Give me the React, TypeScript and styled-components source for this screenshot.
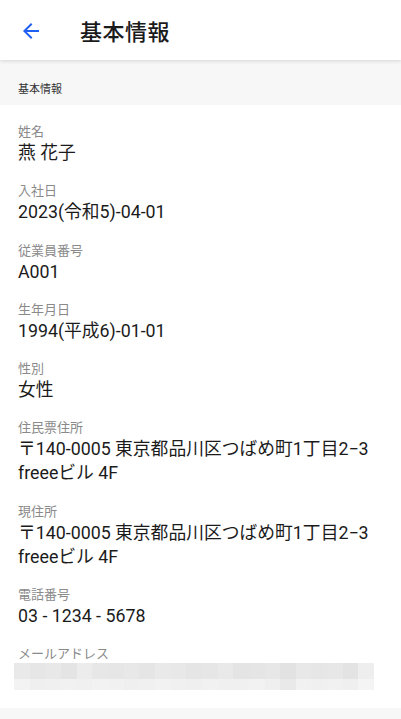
import styled, { createGlobalStyle } from "styled-components";

const GlobalStyle = createGlobalStyle`
  html, body {
    margin: 0;
    padding: 0;
    background: #fff;
    font-family: Roboto, "Noto Sans CJK JP", sans-serif;
    -webkit-font-smoothing: antialiased;
  }
  * { box-sizing: border-box; }
`;

const Page = styled.div`
  width: 401px;
  min-height: 719px;
  display: flex;
  flex-direction: column;
  background: #fff;
`;

const Header = styled.header`
  height: 60px;
  display: flex;
  align-items: center;
  padding-left: 19px;
  background: #fff;
  box-shadow: 0 1px 4px rgba(0, 0, 0, 0.14);
  position: relative;
  z-index: 1;
`;

const BackButton = styled.button`
  width: 24px;
  height: 24px;
  padding: 0;
  border: 0;
  background: none;
  display: flex;
  align-items: center;
  justify-content: center;
  margin-right: 37px;
  margin-top: 2px;
`;

const Title = styled.h1`
  margin: 0;
  font-size: 22px;
  font-weight: 500;
  color: #1b1b1b;
  letter-spacing: 0.5px;
`;

const SectionHeader = styled.div`
  height: 45px;
  display: flex;
  align-items: center;
  padding: 10px 18px 0;
  background: #f7f7f7;
  font-size: 11px;
  color: #333;
`;

const List = styled.dl`
  margin: 0;
  padding: 18px 18px 18px;
  display: flex;
  flex-direction: column;
  gap: 17.3px;
`;

const Field = styled.div`
  display: flex;
  flex-direction: column;
`;

const Label = styled.dt`
  font-size: 13px;
  line-height: 18px;
  color: #8a8a8a;
`;

const Value = styled.dd`
  margin: 0;
  font-size: 17.8px;
  line-height: 24px;
  color: #1b1b1b;
`;

const Blur = styled.div`
  margin: 0 0 0 -4px;
  width: 360px;
  display: flex;
  flex-direction: column;
`;

const BlurRow = styled.div<{ $h: number }>`
  display: flex;
  height: ${(p) => p.$h}px;
`;

const BlurCell = styled.span<{ $c: string }>`
  flex: 1;
  background: ${(p) => p.$c};
`;

const Footer = styled.div`
  flex: 1;
  min-height: 10px;
  background: #f7f7f7;
`;

const topRow = [
  "#e9e9e9", "#e6e6e6", "#e8e8e8", "#e4e4e4", "#ececec", "#e7e7e7",
  "#e6e6e6", "#e8e8e8", "#e5e5e5", "#e9e9e9", "#e8e8e8", "#e5e5e5",
  "#e6e6e6", "#e9e9e9", "#e4e4e4", "#e5e5e5", "#e7e7e7", "#e2e2e2",
  "#e8e8e8", "#e6e6e6", "#e7e7e7", "#e3e3e3", "#eeeeee",
];
const bottomRow = [
  "#f3f3f3", "#efefef", "#f0f0f0", "#f1f1f1", "#f0f0f0", "#f2f2f2",
  "#f1f1f1", "#efefef", "#f0f0f0", "#f2f2f2", "#f0f0f0", "#efefef",
  "#f1f1f1", "#f0f0f0", "#f0f0f0", "#f2f2f2", "#efefef", "#e9e9e9",
  "#f1f1f1", "#f0f0f0", "#f1f1f1", "#efefef", "#f4f4f4",
];

const fields: { label: string; value: string[] }[] = [
  { label: "姓名", value: ["燕 花子"] },
  { label: "入社日", value: ["2023(令和5)-04-01"] },
  { label: "従業員番号", value: ["A001"] },
  { label: "生年月日", value: ["1994(平成6)-01-01"] },
  { label: "性別", value: ["女性"] },
  { label: "住民票住所", value: ["〒140-0005 東京都品川区つばめ町1丁目2−3", "freeeビル 4F"] },
  { label: "現住所", value: ["〒140-0005 東京都品川区つばめ町1丁目2−3", "freeeビル 4F"] },
  { label: "電話番号", value: ["03 - 1234 - 5678"] },
];

export default function App() {
  return (
    <Page>
      <GlobalStyle />
      <Header>
        <BackButton aria-label="戻る">
          <svg width="24" height="24" viewBox="0 0 24 24">
            <path
              d="M20 11H7.83l5.59-5.59L12 4l-8 8 8 8 1.41-1.41L7.83 13H20v-2z"
              fill="#1f5ff2"
            />
          </svg>
        </BackButton>
        <Title>基本情報</Title>
      </Header>
      <SectionHeader>基本情報</SectionHeader>
      <List>
        {fields.map((f) => (
          <Field key={f.label}>
            <Label>{f.label}</Label>
            <Value>
              {f.value.map((line, i) => (
                <div key={i}>{line}</div>
              ))}
            </Value>
          </Field>
        ))}
        <Field>
          <Label>メールアドレス</Label>
          <Blur>
            <BlurRow $h={16}>
              {topRow.map((c, i) => (
                <BlurCell key={i} $c={c} />
              ))}
            </BlurRow>
            <BlurRow $h={11}>
              {bottomRow.map((c, i) => (
                <BlurCell key={i} $c={c} />
              ))}
            </BlurRow>
          </Blur>
        </Field>
      </List>
      <Footer />
    </Page>
  );
}
